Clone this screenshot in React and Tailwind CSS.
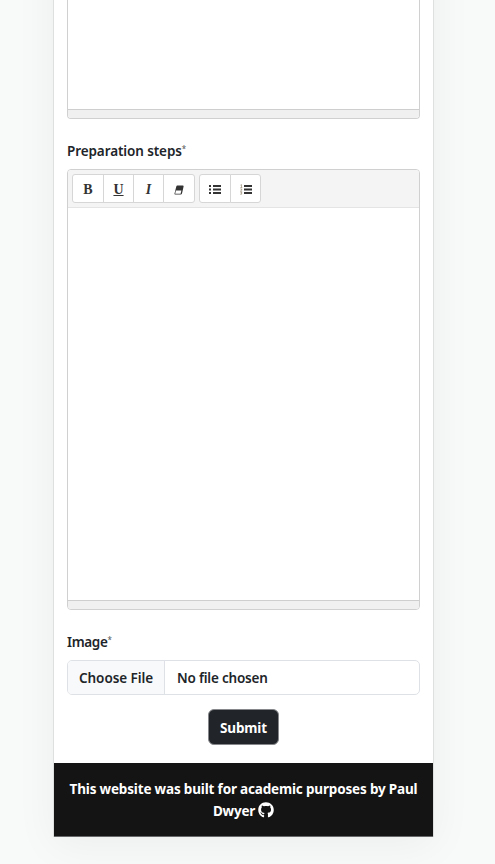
import React from "react";

function ToolButton({ label, className = "", children }) {
  return (
    <button
      type="button"
      aria-label={label}
      className={`flex h-[29px] items-center justify-center border border-[#d6d6d6] bg-white pt-[2px] text-[#333] ${className}`}
    >
      {children}
    </button>
  );
}

const serif = "font-['Liberation_Serif',serif] text-[14px] leading-none";

function Bars() {
  return <path d="M4 1h8v1.9H4zM4 4.5h8v1.9H4zM4 8h8v1.9H4z" />;
}

function Toolbar() {
  return (
    <div className="flex h-[38px] shrink-0 items-start gap-[4px] border-b border-[#e4e4e4] bg-[#f4f4f4] pt-[4px] pl-[4px]">
      <div className="flex">
        <ToolButton label="Bold" className="w-[32px] rounded-l-[3px]">
          <span className={`${serif} font-bold`}>B</span>
        </ToolButton>
        <ToolButton label="Underline" className="-ml-px w-[31px]">
          <span className={`${serif} underline`}>U</span>
        </ToolButton>
        <ToolButton label="Italic" className="-ml-px w-[31px]">
          <span className={`${serif} font-bold italic`}>I</span>
        </ToolButton>
        <ToolButton label="Remove style" className="-ml-px w-[32px] rounded-r-[3px]">
          <svg width="10" height="10" viewBox="0 0 10 10" fill="currentColor">
            <path d="M3.2 .5h5.6q1 0 .8 1L8 8.500q-.3 1-1.300 1H1.200Q.2 9.500 .5 8.500l1.800-7q.3-1 .9-1zM1.900 5.500 1.200 8.700h5.400l.8-3.200z" fillRule="evenodd" />
          </svg>
        </ToolButton>
      </div>
      <div className="flex">
        <ToolButton label="Unordered list" className="w-[32px] rounded-l-[3px]">
          <svg width="12" height="11" viewBox="0 0 12 11" fill="currentColor">
            <Bars />
            <path d="M0 1h2v1.9H0zM0 4.5h2v1.9H0zM0 8h2v1.9H0z" />
          </svg>
        </ToolButton>
        <ToolButton label="Ordered list" className="-ml-px w-[31px] rounded-r-[3px]">
          <svg width="12" height="11" viewBox="0 0 12 11" fill="currentColor">
            <Bars />
            <path d="M.4 1.2 1.5 .6v3M.3 3.600h2M.4 5h1.300v1L.4 7.200h1.800M.4 8.300h1.500L1 9.300q1 0 .8 .7-.4 .6-1.500 .3" fill="none" stroke="#8a7a60" strokeWidth=".6" />
          </svg>
        </ToolButton>
      </div>
    </div>
  );
}

function StatusBar() {
  return <div className="h-[9px] shrink-0 border-t border-[#cecece] bg-[#f0f0f0]" />;
}

function RequiredMark() {
  return <span className="-mt-[5px] text-[8px] leading-none font-normal text-[#555]">*</span>;
}

export default function App() {
  return (
    <div className="flex h-[864px] items-end overflow-hidden bg-[#f8faf9] pb-[27px] font-['Noto_Sans','Open_Sans',sans-serif] text-[13.5px] font-semibold text-[#212529]">
      <main className="ml-[53px] flex h-[937px] w-[381px] shrink-0 flex-col justify-end border-x border-[#dedfdf] bg-white shadow-[0_8px_40px_rgba(0,0,0,0.05)]">
        <div className="flex flex-col px-[13px]">
          <div className="flex h-[219px] flex-col overflow-hidden rounded-b-[4px] border-x border-b border-[#d0d0d0]">
            <div className="grow bg-white" />
            <StatusBar />
          </div>
          <label className="mt-[22px] flex h-[20px] items-center leading-[20px]">
            <span className="tracking-[-0.1px]">Preparation steps</span>
            <RequiredMark />
          </label>
          <div className="mt-[8px] flex h-[441px] flex-col overflow-hidden rounded-[4px] border border-[#d0d0d0]">
            <Toolbar />
            <div className="grow bg-white" />
            <StatusBar />
          </div>
          <label className="mt-[22px] flex h-[20px] items-center leading-[20px]">
            <span className="tracking-[-0.35px]">Image</span>
            <RequiredMark />
          </label>
          <div className="mt-[8px] flex h-[35px] overflow-hidden rounded-[5px] border border-[#dee2e6]">
            <span className="flex w-[97px] items-center border-r border-[#dee2e6] bg-[#f8f9fa] pt-[2px] pl-[11px] tracking-[-0.06px] whitespace-nowrap">
              Choose File
            </span>
            <span className="flex items-center pt-[2px] pl-[12px] tracking-[-0.2px] whitespace-nowrap">No file chosen</span>
          </div>
          <button
            type="button"
            className="mt-[14px] ml-[141px] flex h-[36px] w-[71px] items-center justify-center rounded-[6px] border border-[#85878a] bg-[#212529] pt-[2px] font-bold tracking-[-0.15px] text-white"
          >
            Submit
          </button>
        </div>
        <footer className="mt-[18px] h-[74px] shrink-0 border-b border-[#66686a] bg-[#141414] pt-[15px] text-center leading-[22px] font-bold text-white">
          <p className="tracking-[-0.17px] whitespace-nowrap">This website was built for academic purposes by Paul</p>
          <p className="flex items-center justify-center gap-[3px] tracking-[-0.2px]">
            Dwyer
            <svg className="-mt-[2px]" width="16" height="16" viewBox="0 0 496 512" fill="currentColor">
              <path d="M165.900 397.400c0 2-2.300 3.600-5.200 3.600-3.300.3-5.600-1.300-5.600-3.600 0-2 2.300-3.600 5.200-3.600 3-.3 5.600 1.300 5.600 3.600zM244.800 8C106.100 8 0 113.300 0 252c0 110.900 69.800 205.800 169.500 239.200 12.800 2.300 17.300-5.600 17.300-12.100 0-6.200-.3-40.400-.3-61.400 0 0-70 15-84.700-29.800 0 0-11.400-29.100-27.800-36.600 0 0-22.900-15.700 1.600-15.400 0 0 24.900 2 38.600 25.800 21.900 38.600 58.600 27.500 72.900 20.900 2.300-16 8.800-27.100 16-33.700-55.900-6.200-112.300-14.300-112.300-110.500 0-27.500 7.600-41.300 23.600-58.900-2.600-6.500-11.100-33.300 2.600-67.900 20.900-6.500 69 27 69 27 20-5.600 41.500-8.500 62.800-8.500s42.800 2.900 62.800 8.500c0 0 48.100-33.600 69-27 13.700 34.700 5.200 61.400 2.600 67.900 16 17.700 25.800 31.500 25.800 58.900 0 96.500-58.900 104.200-114.800 110.500 9.200 7.900 17 22.900 17 46.400 0 33.700-.3 75.400-.3 83.600 0 6.500 4.600 14.400 17.300 12.100C428.200 457.800 496 362.900 496 252 496 113.300 383.500 8 244.800 8z" />
            </svg>
          </p>
        </footer>
      </main>
    </div>
  );
}
